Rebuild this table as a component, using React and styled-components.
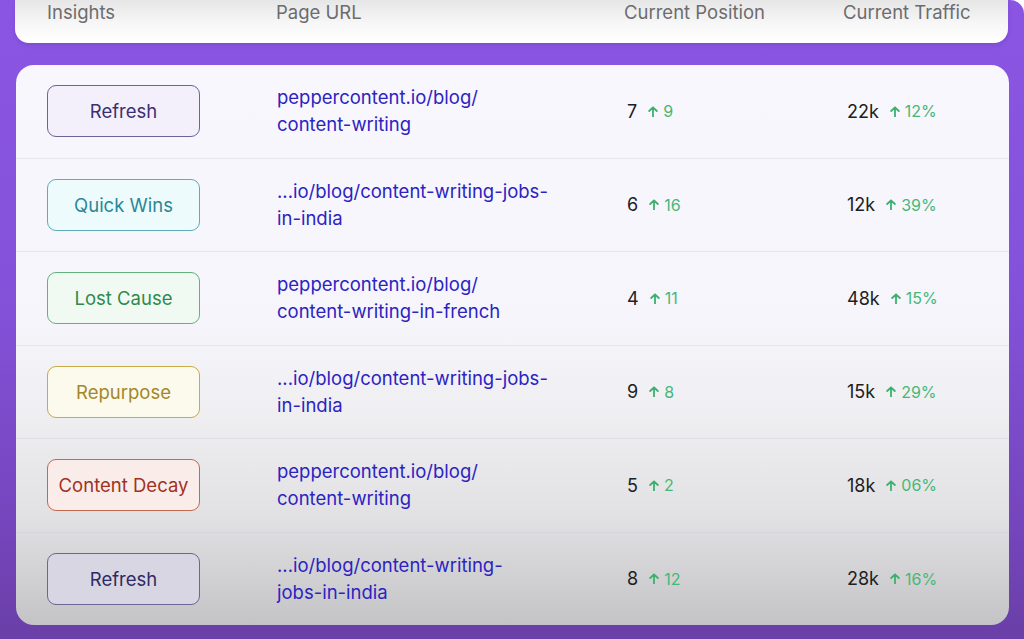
import React from 'react';
import styled, { createGlobalStyle } from 'styled-components';

const GlobalStyle = createGlobalStyle`
  html, body {
    margin: 0;
    padding: 0;
  }
  body {
    font-family: Inter, "Noto Sans", "Liberation Sans", sans-serif;
    background: #ffffff;
  }
`;

const Page = styled.div`
  width: 1024px;
  height: 639px;
  box-sizing: border-box;
  padding: 0 16px 0 15px;
  display: flex;
  flex-direction: column;
  gap: 22px;
  background: linear-gradient(180deg, #8a55e3 0%, #8452da 45%, #7646bf 80%, #6a3fa7 100%);
  border-top-right-radius: 14px;
  overflow: hidden;
`;

const HeaderCard = styled.div`
  height: 43px;
  box-sizing: border-box;
  display: grid;
  grid-template-columns: 229px 348px 219px 1fr;
  padding-left: 32px;
  background: linear-gradient(180deg, #e6e6e7 0%, #f7f7f8 55%, #ffffff 100%);
  border-radius: 0 0 14px 14px;
  box-shadow: 0 2px 4px rgba(60, 20, 120, 0.15);
`;

const HeadCell = styled.div`
  font-size: 18.5px;
  line-height: 24px;
  color: #6c6c6d;
  white-space: nowrap;
`;

const Card = styled.div`
  height: 560px;
  margin-right: -1px;
  margin-left: 1px;
  display: flex;
  flex-direction: column;
  background: linear-gradient(180deg, #f8f7fd 0%, #f6f5fb 45%, #efeff2 62%, #e2e2e4 80%, #c4c4c6 100%);
  border-radius: 18px;
  overflow: hidden;
`;

const Row = styled.div`
  flex: 1;
  display: grid;
  grid-template-columns: 230px 350px 220px 1fr;
  align-items: center;
  padding-left: 31px;
  border-top: ${(p) => (p.$first ? 'none' : '1px solid rgba(200, 198, 215, 0.35)')};
`;

const Badge = styled.div`
  width: 153px;
  height: 52px;
  box-sizing: border-box;
  display: flex;
  align-items: center;
  justify-content: center;
  border-radius: 9px;
  border: 1.5px solid ${(p) => p.$border};
  background: ${(p) => p.$bg};
  color: ${(p) => p.$color};
  font-size: 18.5px;
`;

const Url = styled.div`
  font-size: 18.5px;
  line-height: 27px;
  color: #2c23c2;
  white-space: nowrap;
`;

const Metric = styled.div`
  display: flex;
  align-items: center;
  white-space: nowrap;
`;

const Value = styled.span`
  font-size: 18px;
  color: #202022;
  margin-right: ${(p) => p.$gap}px;
`;

const Change = styled.span`
  display: inline-flex;
  align-items: center;
  gap: 5px;
  font-size: 16px;
  color: #45b878;
`;

const ArrowUp = () => (
  <svg width="10" height="11" viewBox="0 0 10 11" fill="none">
    <path d="M5 10.5V1.5M1.2 5L5 1.3 8.8 5" stroke="#3daf6f" strokeWidth="1.8" strokeLinecap="round" strokeLinejoin="round" />
  </svg>
);

const badgeStyles = {
  refresh: { bg: '#f3f0fc', border: '#6d6399', color: '#3b2f70' },
  quick: { bg: '#eefbfd', border: '#5eacba', color: '#2a8796' },
  lost: { bg: '#f0faf3', border: '#62b27e', color: '#2f8a4d' },
  repurpose: { bg: '#fcfaec', border: '#c8aa48', color: '#a5872a' },
  decay: { bg: '#f9ece9', border: '#c4694f', color: '#a0321e' },
  refreshDark: { bg: '#d8d6e2', border: '#6a6790', color: '#2f2a62' },
};

const rows = [
  { type: 'refresh', label: 'Refresh', url: ['peppercontent.io/blog/', 'content-writing'], pos: '7', posUp: '9', traffic: '22k', trafficUp: '12%' },
  { type: 'quick', label: 'Quick Wins', url: ['...io/blog/content-writing-jobs-', 'in-india'], pos: '6', posUp: '16', traffic: '12k', trafficUp: '39%' },
  { type: 'lost', label: 'Lost Cause', url: ['peppercontent.io/blog/', 'content-writing-in-french'], pos: '4', posUp: '11', traffic: '48k', trafficUp: '15%' },
  { type: 'repurpose', label: 'Repurpose', url: ['...io/blog/content-writing-jobs-', 'in-india'], pos: '9', posUp: '8', traffic: '15k', trafficUp: '29%' },
  { type: 'decay', label: 'Content Decay', url: ['peppercontent.io/blog/', 'content-writing'], pos: '5', posUp: '2', traffic: '18k', trafficUp: '06%' },
  { type: 'refreshDark', label: 'Refresh', url: ['...io/blog/content-writing-', 'jobs-in-india'], pos: '8', posUp: '12', traffic: '28k', trafficUp: '16%' },
];

export default function App() {
  return (
    <>
      <GlobalStyle />
      <Page>
        <HeaderCard>
          <HeadCell>Insights</HeadCell>
          <HeadCell>Page URL</HeadCell>
          <HeadCell>Current Position</HeadCell>
          <HeadCell>Current Traffic</HeadCell>
        </HeaderCard>
        <Card>
          {rows.map((r, i) => {
            const s = badgeStyles[r.type];
            return (
              <Row key={i} $first={i === 0}>
                <Badge $bg={s.bg} $border={s.border} $color={s.color}>{r.label}</Badge>
                <Url>
                  {r.url[0]}
                  <br />
                  {r.url[1]}
                </Url>
                <Metric>
                  <Value $gap={11}>{r.pos}</Value>
                  <Change><ArrowUp />{r.posUp}</Change>
                </Metric>
                <Metric>
                  <Value $gap={11}>{r.traffic}</Value>
                  <Change><ArrowUp />{r.trafficUp}</Change>
                </Metric>
              </Row>
            );
          })}
        </Card>
      </Page>
    </>
  );
}
